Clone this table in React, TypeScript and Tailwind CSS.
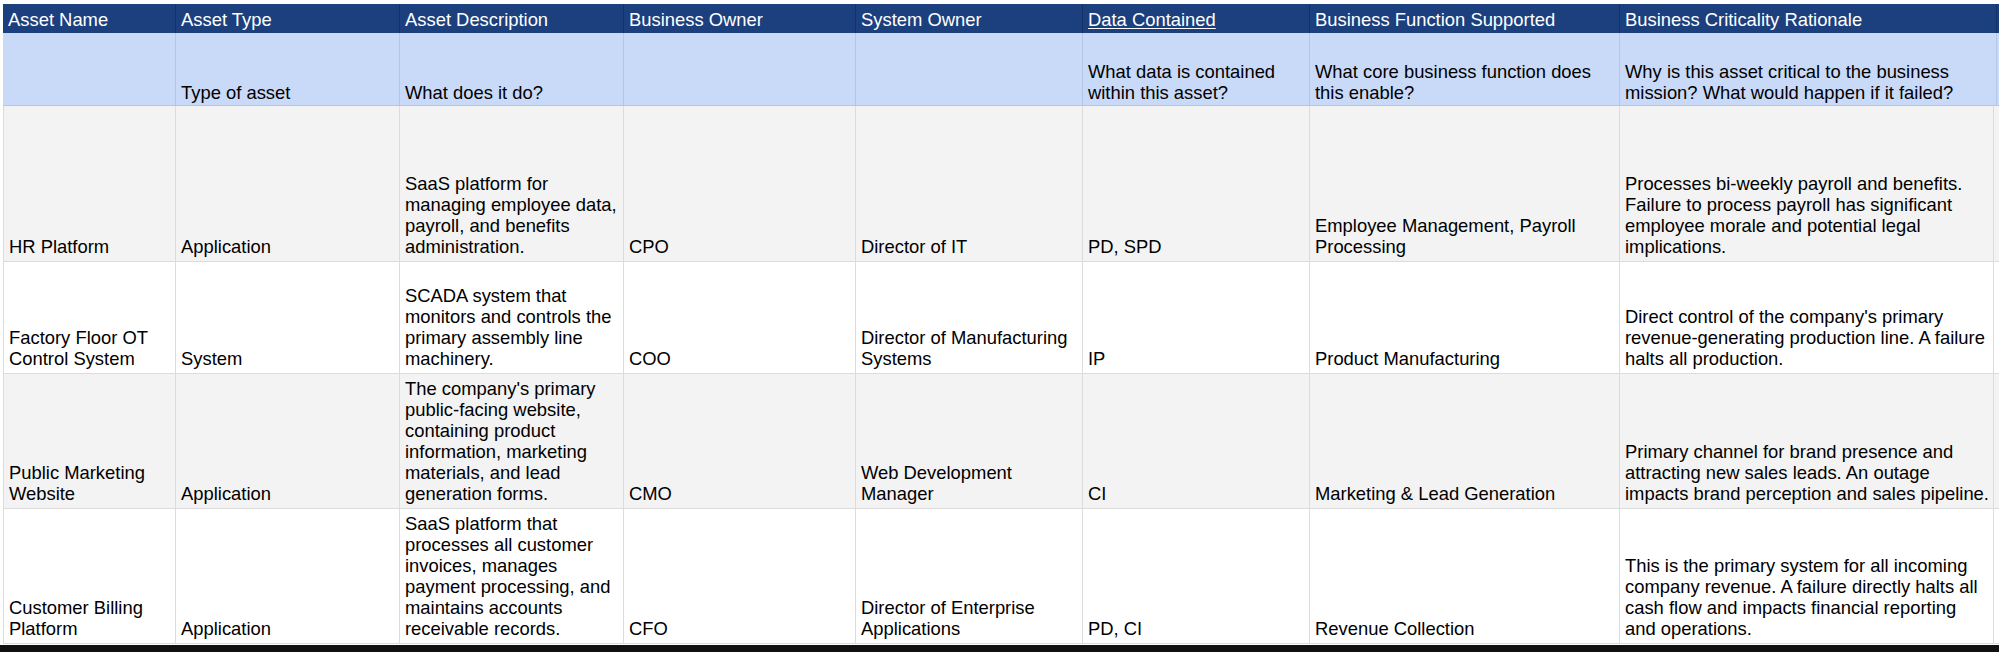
import React from "react";

type Cell = { lines: string[]; underline?: boolean };

const cols = [
  "w-[173px]",
  "w-[224px]",
  "w-[224px]",
  "w-[232px]",
  "w-[227px]",
  "w-[227px]",
  "w-[310px]",
  "w-[374px]",
];

const header: Cell[] = [
  { lines: ["Asset Name"] },
  { lines: ["Asset Type"] },
  { lines: ["Asset Description"] },
  { lines: ["Business Owner"] },
  { lines: ["System Owner"] },
  { lines: ["Data Contained"], underline: true },
  { lines: ["Business Function Supported"] },
  { lines: ["Business Criticality Rationale"] },
];

const guide: Cell[] = [
  { lines: [] },
  { lines: ["Type of asset"] },
  { lines: ["What does it do?"] },
  { lines: [] },
  { lines: [] },
  { lines: ["What data is contained", "within this asset?"] },
  { lines: ["What core business function does", "this enable?"] },
  { lines: ["Why is this asset critical to the business", "mission? What would happen if it failed?"] },
];

const rows: { h: string; bg: string; cells: Cell[] }[] = [
  {
    h: "h-[156px]",
    bg: "bg-[#f3f3f3]",
    cells: [
      { lines: ["HR Platform"] },
      { lines: ["Application"] },
      { lines: ["SaaS platform for", "managing employee data,", "payroll, and benefits", "administration."] },
      { lines: ["CPO"] },
      { lines: ["Director of IT"] },
      { lines: ["PD, SPD"] },
      { lines: ["Employee Management, Payroll", "Processing"] },
      {
        lines: [
          "Processes bi-weekly payroll and benefits.",
          "Failure to process payroll has significant",
          "employee morale and potential legal",
          "implications.",
        ],
      },
    ],
  },
  {
    h: "h-[112px]",
    bg: "bg-white",
    cells: [
      { lines: ["Factory Floor OT", "Control System"] },
      { lines: ["System"] },
      { lines: ["SCADA system that", "monitors and controls the", "primary assembly line", "machinery."] },
      { lines: ["COO"] },
      { lines: ["Director of Manufacturing", "Systems"] },
      { lines: ["IP"] },
      { lines: ["Product Manufacturing"] },
      {
        lines: [
          "Direct control of the company's primary",
          "revenue-generating production line. A failure",
          "halts all production.",
        ],
      },
    ],
  },
  {
    h: "h-[135px]",
    bg: "bg-[#f3f3f3]",
    cells: [
      { lines: ["Public Marketing", "Website"] },
      { lines: ["Application"] },
      {
        lines: [
          "The company's primary",
          "public-facing website,",
          "containing product",
          "information, marketing",
          "materials, and lead",
          "generation forms.",
        ],
      },
      { lines: ["CMO"] },
      { lines: ["Web Development", "Manager"] },
      { lines: ["CI"] },
      { lines: ["Marketing & Lead Generation"] },
      {
        lines: [
          "Primary channel for brand presence and",
          "attracting new sales leads. An outage",
          "impacts brand perception and sales pipeline.",
        ],
      },
    ],
  },
  {
    h: "h-[135px]",
    bg: "bg-white",
    cells: [
      { lines: ["Customer Billing", "Platform"] },
      { lines: ["Application"] },
      {
        lines: [
          "SaaS platform that",
          "processes all customer",
          "invoices, manages",
          "payment processing, and",
          "maintains accounts",
          "receivable records.",
        ],
      },
      { lines: ["CFO"] },
      { lines: ["Director of Enterprise", "Applications"] },
      { lines: ["PD, CI"] },
      { lines: ["Revenue Collection"] },
      {
        lines: [
          "This is the primary system for all incoming",
          "company revenue. A failure directly halts all",
          "cash flow and impacts financial reporting",
          "and operations.",
        ],
      },
    ],
  },
];

function Lines({ cell }: { cell: Cell }) {
  return (
    <>
      {cell.lines.map((l, i) => (
        <div key={i} className={"whitespace-nowrap " + (cell.underline ? "underline underline-offset-2" : "")}>
          {l}
        </div>
      ))}
    </>
  );
}

export default function App() {
  return (
    <div
      className="w-[1999px] h-[652px] bg-white overflow-hidden flex flex-col text-[18.4px] leading-[21px] text-black"
      style={{ fontFamily: '"Liberation Sans", Arial, Helvetica, sans-serif' }}
    >
      <div className="pt-[4px] pl-[3px] flex flex-col">
        <div className="flex h-[29px] bg-[#1c3f7d] text-white">
          {header.map((c, i) => (
            <div
              key={i}
              className={`${cols[i]} ${i === 7 ? "w-[377px]" : ""} shrink-0 flex flex-col justify-end px-[5px] pb-[3px] border-r border-[#163265]`}
            >
              <Lines cell={c} />
            </div>
          ))}
        </div>
        <div className="flex h-[73px] bg-[#c9daf8] border-b border-[#b4c6e6]">
          {guide.map((c, i) => (
            <div
              key={i}
              className={`${cols[i]} ${i === 7 ? "w-[377px]" : ""} shrink-0 flex flex-col justify-end px-[5px] pb-[2px] border-r border-[#b4c6e6]`}
            >
              <Lines cell={c} />
            </div>
          ))}
        </div>
        {rows.map((r, ri) => (
          <div key={ri} className={`flex ${r.h} ${r.bg} border-b border-[#dcdcdc]`}>
            {r.cells.map((c, i) => (
              <div
                key={i}
                className={`${cols[i]} shrink-0 flex flex-col justify-end px-[5px] pb-[4px] border-r border-[#dcdcdc] ${i === 0 ? "border-l" : ""}`}
              >
                <Lines cell={c} />
              </div>
            ))}
          </div>
        ))}
      </div>
      <div className="mt-[1px] h-[7px] bg-[#111111]" />
    </div>
  );
}
